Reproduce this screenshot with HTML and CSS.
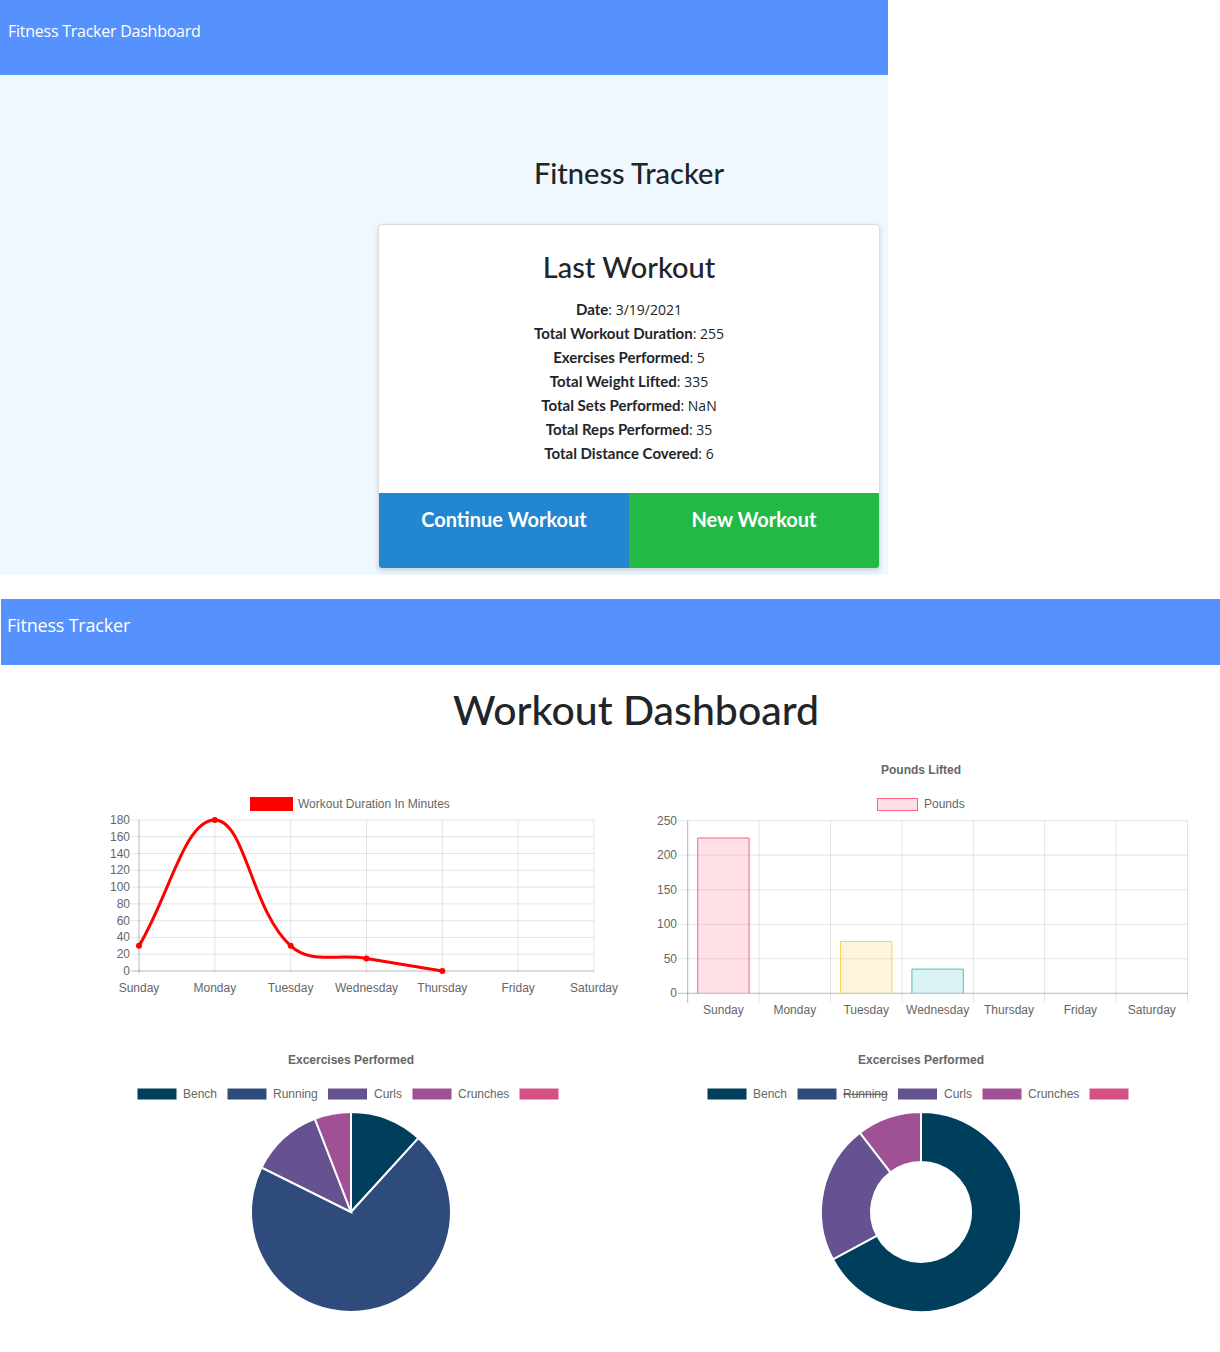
FILE: index.html
```html
<!DOCTYPE html>
<html lang="en">
<head>
<meta charset="utf-8">
<title>Fitness Tracker</title>
<link rel="stylesheet" href="styles.css">
</head>
<body>
<section class="landing">
  <header class="topbar">Fitness Tracker Dashboard</header>
  <main class="landing-main">
    <div class="landing-col">
      <h1 class="landing-title">Fitness Tracker</h1>
      <div class="card">
        <h2 class="card-title">Last Workout</h2>
        <ul class="stats">
          <li><strong>Date</strong>: 3/19/2021</li>
          <li><strong>Total Workout Duration</strong>: 255</li>
          <li><strong>Exercises Performed</strong>: 5</li>
          <li><strong>Total Weight Lifted</strong>: 335</li>
          <li><strong>Total Sets Performed</strong>: NaN</li>
          <li><strong>Total Reps Performed</strong>: 35</li>
          <li><strong>Total Distance Covered</strong>: 6</li>
        </ul>
        <div class="actions">
          <a class="btn btn-continue" href="#">Continue Workout</a>
          <a class="btn btn-new" href="#">New Workout</a>
        </div>
      </div>
    </div>
  </main>
</section>

<section class="dashboard">
  <header class="dashbar">Fitness Tracker</header>
  <div class="container">
    <h1 class="dash-title">Workout Dashboard</h1>
    <div class="chart-grid">
      <svg class="chart chart-top" viewBox="66 750 570 280" width="570" height="280">
        <g class="legend">
          <rect x="250" y="797" width="43" height="14" fill="#ff0000"/>
          <text x="298" y="808">Workout Duration In Minutes</text>
        </g>
        <g class="grid">
          <line x1="131" y1="820" x2="594" y2="820"/>
          <line x1="131" y1="836.78" x2="594" y2="836.78"/>
          <line x1="131" y1="853.56" x2="594" y2="853.56"/>
          <line x1="131" y1="870.33" x2="594" y2="870.33"/>
          <line x1="131" y1="887.11" x2="594" y2="887.11"/>
          <line x1="131" y1="903.89" x2="594" y2="903.89"/>
          <line x1="131" y1="920.67" x2="594" y2="920.67"/>
          <line x1="131" y1="937.44" x2="594" y2="937.44"/>
          <line x1="131" y1="954.22" x2="594" y2="954.22"/>
          <line x1="214.83" y1="820" x2="214.83" y2="973"/>
          <line x1="290.67" y1="820" x2="290.67" y2="973"/>
          <line x1="366.5" y1="820" x2="366.5" y2="973"/>
          <line x1="442.33" y1="820" x2="442.33" y2="973"/>
          <line x1="518.17" y1="820" x2="518.17" y2="973"/>
          <line x1="594" y1="820" x2="594" y2="973"/>
        </g>
        <g class="axis">
          <line x1="131" y1="971" x2="594" y2="971"/>
          <line x1="139" y1="820" x2="139" y2="973"/>
        </g>
        <g class="ticks-y">
          <text x="130" y="824">180</text>
          <text x="130" y="840.78">160</text>
          <text x="130" y="857.56">140</text>
          <text x="130" y="874.33">120</text>
          <text x="130" y="891.11">100</text>
          <text x="130" y="907.89">80</text>
          <text x="130" y="924.67">60</text>
          <text x="130" y="941.44">40</text>
          <text x="130" y="958.22">20</text>
          <text x="130" y="975">0</text>
        </g>
        <g class="ticks-x">
          <text x="139" y="992">Sunday</text>
          <text x="214.83" y="992">Monday</text>
          <text x="290.67" y="992">Tuesday</text>
          <text x="366.5" y="992">Wednesday</text>
          <text x="442.33" y="992">Thursday</text>
          <text x="518.17" y="992">Friday</text>
          <text x="594" y="992">Saturday</text>
        </g>
        <path class="line" d="M139,945.83 C169.33,895.5 184.5,820 214.83,820 C245.17,820 250.84,909.48 290.67,945.83 C311.51,964.85 336.17,953.39 366.5,958.42 C396.83,963.45 412,965.97 442.33,971"/>
        <g class="dots">
          <circle cx="139" cy="945.83" r="3"/>
          <circle cx="214.83" cy="820" r="3"/>
          <circle cx="290.67" cy="945.83" r="3"/>
          <circle cx="366.5" cy="958.42" r="3"/>
          <circle cx="442.33" cy="971" r="3"/>
        </g>
      </svg>

      <svg class="chart chart-top" viewBox="636 750 570 280" width="570" height="280">
        <text class="title" x="921" y="774">Pounds Lifted</text>
        <g class="legend">
          <rect x="877.5" y="798.5" width="40" height="12" fill="rgba(255,99,132,0.2)" stroke="rgb(255,99,132)"/>
          <text x="924" y="808">Pounds</text>
        </g>
        <g class="grid">
          <line x1="678" y1="820.7" x2="1188" y2="820.7"/>
          <line x1="678" y1="855.2" x2="1188" y2="855.2"/>
          <line x1="678" y1="889.8" x2="1188" y2="889.8"/>
          <line x1="678" y1="924.3" x2="1188" y2="924.3"/>
          <line x1="678" y1="958.8" x2="1188" y2="958.8"/>
          <line x1="759.1" y1="820.7" x2="759.1" y2="1003"/>
          <line x1="830.5" y1="820.7" x2="830.5" y2="1003"/>
          <line x1="901.9" y1="820.7" x2="901.9" y2="1003"/>
          <line x1="973.3" y1="820.7" x2="973.3" y2="1003"/>
          <line x1="1044.7" y1="820.7" x2="1044.7" y2="1003"/>
          <line x1="1116.1" y1="820.7" x2="1116.1" y2="1003"/>
          <line x1="1187.5" y1="820.7" x2="1187.5" y2="1003"/>
        </g>
        <g class="axis">
          <line x1="678" y1="993.3" x2="1188" y2="993.3"/>
          <line x1="687.7" y1="820.7" x2="687.7" y2="1003"/>
        </g>
        <g class="ticks-y">
          <text x="677" y="824.7">250</text>
          <text x="677" y="859.2">200</text>
          <text x="677" y="893.8">150</text>
          <text x="677" y="928.3">100</text>
          <text x="677" y="962.8">50</text>
          <text x="677" y="997.3">0</text>
        </g>
        <path d="M697.7,993.3 V838 H749.1 V993.3" fill="rgba(255,99,132,0.2)" stroke="rgb(255,99,132)"/>
        <path d="M840.5,993.3 V941.5 H891.9 V993.3" fill="rgba(255,206,86,0.2)" stroke="rgb(255,206,86)"/>
        <path d="M911.9,993.3 V969.1 H963.3 V993.3" fill="rgba(75,192,192,0.2)" stroke="rgb(75,192,192)"/>
        <g class="ticks-x">
          <text x="723.4" y="1014">Sunday</text>
          <text x="794.8" y="1014">Monday</text>
          <text x="866.2" y="1014">Tuesday</text>
          <text x="937.6" y="1014">Wednesday</text>
          <text x="1009" y="1014">Thursday</text>
          <text x="1080.4" y="1014">Friday</text>
          <text x="1151.8" y="1014">Saturday</text>
        </g>
      </svg>

      <svg class="chart chart-bottom" viewBox="66 1040 570 290" width="570" height="290">
        <text class="title" x="351" y="1064">Excercises Performed</text>
        <g class="legend pie-legend">
          <rect x="137" y="1088" width="40" height="12" fill="#003f5c"/>
          <text x="183" y="1098">Bench</text>
          <rect x="227" y="1088" width="40" height="12" fill="#2f4b7c"/>
          <text x="273" y="1098">Running</text>
          <rect x="327.5" y="1088" width="40" height="12" fill="#665191"/>
          <text x="374" y="1098">Curls</text>
          <rect x="412" y="1088" width="40" height="12" fill="#a05195"/>
          <text x="458" y="1098">Crunches</text>
          <rect x="519" y="1088" width="40" height="12" fill="#d45087"/>
        </g>
        <g class="slices">
          <path fill="#003f5c" d="M351,1212 L351,1112 A100,100 0 0 1 418.37,1138.10 Z"/>
          <path fill="#2f4b7c" d="M351,1212 L418.37,1138.10 A100,100 0 1 1 261.48,1167.43 Z"/>
          <path fill="#665191" d="M351,1212 L261.48,1167.43 A100,100 0 0 1 314.87,1118.75 Z"/>
          <path fill="#a05195" d="M351,1212 L314.87,1118.75 A100,100 0 0 1 351,1112 Z"/>
        </g>
      </svg>

      <svg class="chart chart-bottom" viewBox="636 1040 570 290" width="570" height="290">
        <text class="title" x="921" y="1064">Excercises Performed</text>
        <g class="legend pie-legend">
          <rect x="707" y="1088" width="40" height="12" fill="#003f5c"/>
          <text x="753" y="1098">Bench</text>
          <rect x="797" y="1088" width="40" height="12" fill="#2f4b7c"/>
          <text x="843" y="1098" text-decoration="line-through">Running</text>
          <rect x="897.5" y="1088" width="40" height="12" fill="#665191"/>
          <text x="944" y="1098">Curls</text>
          <rect x="982" y="1088" width="40" height="12" fill="#a05195"/>
          <text x="1028" y="1098">Crunches</text>
          <rect x="1089" y="1088" width="40" height="12" fill="#d45087"/>
        </g>
        <g class="slices">
          <path fill="#003f5c" d="M921,1112 A100,100 0 1 1 832.88,1259.27 L876.94,1235.64 A50,50 0 1 0 921,1162 Z"/>
          <path fill="#665191" d="M832.88,1259.27 A100,100 0 0 1 859.98,1132.77 L890.49,1172.39 A50,50 0 0 0 876.94,1235.64 Z"/>
          <path fill="#a05195" d="M859.98,1132.77 A100,100 0 0 1 921,1112 L921,1162 A50,50 0 0 0 890.49,1172.39 Z"/>
        </g>
      </svg>
    </div>
  </div>
</section>
</body>
</html>
```

FILE: styles.css
```css
body {
  margin: 0;
  background: #ffffff;
  font-family: "Open Sans", "Noto Sans", sans-serif;
  color: #212529;
}

.landing {
  width: 888px;
  height: 575px;
  background: #f0f8ff;
}

.topbar {
  box-sizing: border-box;
  height: 75px;
  padding: 20px 0 0 8px;
  background: #5692fd;
  color: #ffffff;
  font-size: 16px;
  letter-spacing: -0.25px;
  line-height: 23px;
}

.landing-main {
  display: flex;
  justify-content: flex-end;
  padding-right: 8px;
}

.landing-col {
  width: 502px;
  display: flex;
  flex-direction: column;
  align-items: center;
}

.landing-title {
  margin: 80px 0 0;
  font-family: Lato, sans-serif;
  font-size: 29px;
  font-weight: 500;
  line-height: 36px;
  color: #212529;
}

.card {
  box-sizing: border-box;
  width: 100%;
  margin-top: 33px;
  background: #ffffff;
  border: 1px solid #dcdcdc;
  border-radius: 4px;
  overflow: hidden;
  box-shadow: 0 2px 5px rgba(0, 0, 0, 0.15);
  text-align: center;
}

.card-title {
  margin: 24px 0 0;
  font-family: Lato, sans-serif;
  font-size: 29px;
  font-weight: 500;
  line-height: 36px;
}

.stats {
  list-style: none;
  margin: 13px 0 0;
  padding: 0;
  font-size: 14px;
  line-height: 24px;
  color: #212529;
}

.stats li {
  height: 24px;
}

.stats strong {
  font-family: Lato, sans-serif;
  font-size: 15px;
  font-weight: 700;
  line-height: 1;
}

.actions {
  display: flex;
  margin-top: 27px;
}

.btn {
  flex: 1;
  box-sizing: border-box;
  height: 75px;
  padding-top: 14px;
  font-family: Lato, sans-serif;
  font-size: 20px;
  font-weight: 700;
  line-height: 24px;
  color: #ffffff;
  text-decoration: none;
}

.btn-continue {
  background: #2286d0;
}

.btn-new {
  background: #22b946;
}

.dashboard {
  width: 1219px;
  margin: 24px 0 0 1px;
}

.dashbar {
  box-sizing: border-box;
  height: 66px;
  padding: 14px 0 0 6px;
  background: #5692fd;
  color: #ffffff;
  font-size: 18px;
  letter-spacing: -0.2px;
  line-height: 25px;
}

.container {
  width: 1140px;
  margin-left: 65px;
}

.dash-title {
  margin: 21px 0 16px;
  font-family: Lato, sans-serif;
  font-size: 41px;
  font-weight: 500;
  line-height: 48px;
  text-align: center;
  color: #212529;
}

.chart-grid {
  display: grid;
  grid-template-columns: 570px 570px;
  row-gap: 10px;
}

.chart {
  display: block;
  font-family: "Liberation Sans", Arial, sans-serif;
  font-size: 12px;
}

.chart text {
  fill: #666666;
}

.chart .title {
  font-weight: 700;
  text-anchor: middle;
}

.chart .grid line {
  stroke: rgba(0, 0, 0, 0.1);
  stroke-width: 1;
}

.chart .axis line {
  stroke: rgba(0, 0, 0, 0.28);
  stroke-width: 1;
}

.chart .ticks-y text {
  text-anchor: end;
}

.chart .ticks-x text {
  text-anchor: middle;
}

.chart .line {
  fill: none;
  stroke: #ff0000;
  stroke-width: 3;
}

.chart .dots circle {
  fill: #ff0000;
}

.chart .pie-legend rect {
  stroke: #ffffff;
  stroke-width: 1;
}

.chart .slices path {
  stroke: #ffffff;
  stroke-width: 2;
}
```
